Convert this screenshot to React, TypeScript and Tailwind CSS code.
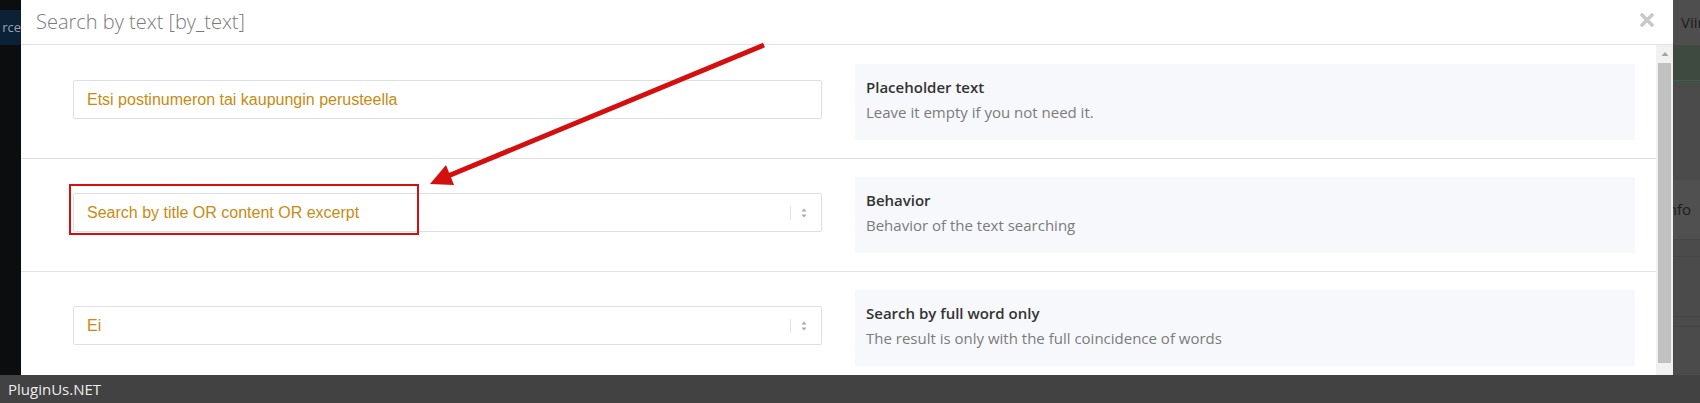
const rows = [
  {
    value: "Etsi postinumeron tai kaupungin perusteella",
    select: false,
    title: "Placeholder text",
    desc: "Leave it empty if you not need it.",
  },
  {
    value: "Search by title OR content OR excerpt",
    select: true,
    title: "Behavior",
    desc: "Behavior of the text searching",
  },
  {
    value: "Ei",
    select: true,
    title: "Search by full word only",
    desc: "The result is only with the full coincidence of words",
  },
];

function SelectArrows() {
  return (
    <div className="flex items-center h-full">
      <div className="w-px h-[14px] bg-[#e3e3e3]" />
      <svg width="26" height="12" viewBox="0 0 26 12">
        <path d="M10.5 4.5 L13 1.5 L15.5 4.5 Z" fill="#a8a8a8" />
        <path d="M10.5 7.5 L13 10.5 L15.5 7.5 Z" fill="#a8a8a8" />
      </svg>
    </div>
  );
}

function Row({ row, last }: { row: (typeof rows)[number]; last: boolean }) {
  return (
    <div className={`flex items-start py-[18px] ${last ? "" : "border-b border-[#e2e2e2]"}`}>
      <div className="ml-[52px] mt-[16px] w-[749px] h-[39px] border border-[#dcdfe4] rounded-[2px] flex items-center pl-[13px] pr-[4px]">
        <span className="flex-1 text-[16px] text-[#c88b12] font-['Liberation_Sans',Arial,sans-serif]">
          {row.value}
        </span>
        {row.select && <SelectArrows />}
      </div>
      <div className="ml-[33px] w-[780px] h-[76px] bg-[#f7f8fb] px-[11px] pt-[12px] font-['Open_Sans',sans-serif] text-[15px]">
        <div className="leading-[23px] font-semibold text-[#333]">{row.title}</div>
        <div className="leading-[23px] mt-[2px] text-[#7b7b7b]">{row.desc}</div>
      </div>
    </div>
  );
}

export default function App() {
  return (
    <div className="relative w-[1700px] h-[403px] bg-[#0d0e10] overflow-hidden flex flex-col">
      <div className="flex h-[375px] overflow-hidden">
        {/* page behind, left edge */}
        <div className="w-[21px] shrink-0 flex flex-col">
          <div className="h-[10px] bg-[#0c0d0f]" />
          <div className="h-[35px] bg-[#0b2136] flex items-center justify-end overflow-hidden">
            <span className="text-[13px] text-[#9aa3ad] font-['Open_Sans',sans-serif] whitespace-nowrap">rce</span>
          </div>
          <div className="flex-1 bg-[#0c0d0f]" />
        </div>

        {/* modal */}
        <div className="w-[1652px] shrink-0 bg-white flex flex-col">
          <div className="h-[45px] shrink-0 border-b border-[#e2e2e2] flex items-center justify-between pl-[15px] pr-[19px]">
            <h2 className="text-[20px] font-light text-[#7a7a7a] font-['Open_Sans',sans-serif]">
              Search by text [by_text]
            </h2>
            <svg width="14" height="14" viewBox="0 0 14 14" className="-mt-[5px]">
              <path d="M2 2 L12 12 M12 2 L2 12" stroke="#c9c9c9" strokeWidth="3.6" strokeLinecap="round" />
            </svg>
          </div>
          <div className="flex flex-1 min-h-0">
            <div className="flex-1 min-w-0 pt-[1px]">
              {rows.map((r, i) => (
                <Row key={i} row={r} last={i === rows.length - 1} />
              ))}
            </div>
            <div className="w-[17px] shrink-0 bg-[#f1f1f1] flex flex-col items-center pt-[3px]">
              <svg width="10" height="12" viewBox="0 0 10 12">
                <path d="M1.5 8 L5 4 L8.5 8 Z" fill="#a3a3a3" />
              </svg>
              <div className="mt-[3px] w-[13px] h-[300px] bg-[#c1c1c1]" />
            </div>
          </div>
        </div>

        {/* page behind, right edge */}
        <div className="flex-1 flex flex-col bg-[#4b4b4b] overflow-hidden">
          <div className="h-[45px] bg-[#4e4e4e] flex items-center pl-[8px]">
            <span className="text-[15px] text-[#1d1d1d] font-['Open_Sans',sans-serif] whitespace-nowrap">Viin</span>
          </div>
          <div className="h-[36px] bg-[#3e4a3f] border-b border-[#2c6a40]" />
          <div className="h-[99px]" />
          <div className="h-[60px] bg-[#505050] border-b border-[#454545] flex items-center -ml-[9px]">
            <span className="text-[15px] text-[#1d1d1d] font-['Open_Sans',sans-serif] whitespace-nowrap">info</span>
          </div>
          <div className="h-[17px] border-b border-[#454545]" />
          <div className="h-[60px] border-b border-[#454545]" />
          <div className="h-[10px] border-b border-[#454545]" />
          <div className="flex-1" />
        </div>
      </div>

      {/* footer bar */}
      <div className="h-[28px] bg-[#424242] flex items-center pl-[8px]">
        <span className="text-[15px] text-[#ededed] font-['Open_Sans',sans-serif]">PluginUs.NET</span>
      </div>

      {/* annotation */}
      <div className="absolute left-[69px] top-[184px] w-[350px] h-[51px] border-2 border-[#d3100f]" />
      <svg className="absolute left-0 top-0 pointer-events-none" width="1700" height="403">
        <line x1="764" y1="45" x2="448" y2="176" stroke="#d40f0f" strokeWidth="5" />
        <polygon points="430,184 446,165 454,185" fill="#d40f0f" />
      </svg>
    </div>
  );
}
